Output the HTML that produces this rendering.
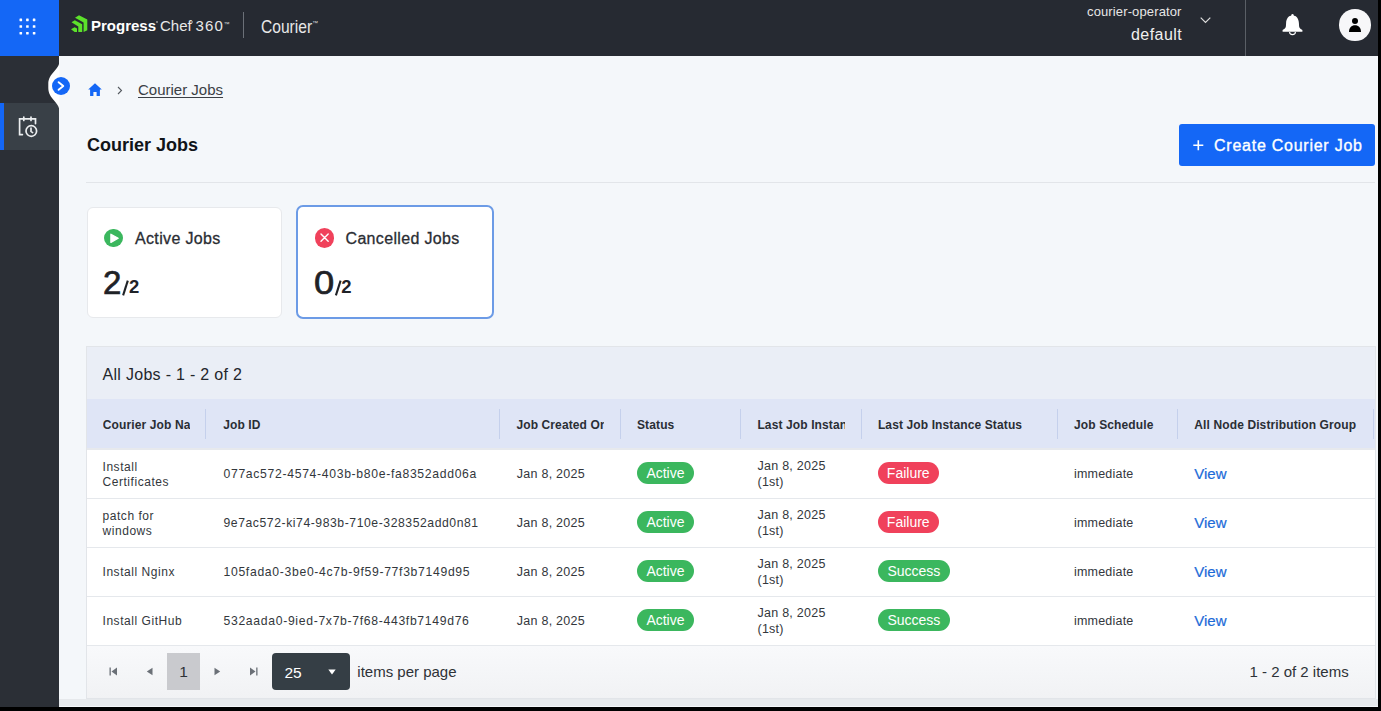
<!DOCTYPE html>
<html><head><meta charset="utf-8">
<style>
*{box-sizing:border-box;margin:0;padding:0}
html,body{width:1381px;height:711px;overflow:hidden;background:#000}
body{position:relative;font-family:"Liberation Sans",sans-serif;color:#23262b}
.a{position:absolute}
svg{display:block}
.t{position:absolute;line-height:1;white-space:nowrap}
#hdr{left:0;top:0;width:1378px;height:56px;background:#262a32}
#apps{left:0;top:0;width:59px;height:56px;background:#1467f6}
#side{left:0;top:56px;width:59px;height:651px;background:#2b2f36}
#main{left:59px;top:56px;width:1319px;height:651px;background:#f4f7fa}
.card{position:absolute;background:#fff;border:1px solid #e7e9ec;border-radius:6px}
.th{position:absolute;top:418.5px;font-size:12px;font-weight:bold;letter-spacing:0.12px;color:#2a2e35;line-height:1;white-space:nowrap}
.sep{position:absolute;top:409px;width:1px;height:30px;background:#c5d0ec}
.row{position:absolute;left:87px;width:1287.5px;height:48px;background:#fff}
.cell{position:absolute;font-size:13px;line-height:1;white-space:nowrap;color:#2b2f34}
.pill{position:absolute;height:22px;border-radius:11px;color:#fff;font-size:14px;line-height:23.5px;text-align:center}
.g{background:#3bb75e}
.r{background:#f0415b}
.view{position:absolute;font-size:15px;line-height:1;color:#1c6bd8}
</style></head><body>
<div id="hdr" class="a"></div>
<div id="apps" class="a"></div>
<div id="side" class="a"></div>
<div id="main" class="a"></div>

<!-- apps grid -->
<svg class="a" style="left:0;top:0" width="59" height="56" viewBox="0 0 59 56"><g fill="#fff"><rect x="19.5" y="18.6" width="2.6" height="2.6" rx="0.4"/><rect x="26.1" y="18.6" width="2.6" height="2.6" rx="0.4"/><rect x="32.8" y="18.6" width="2.6" height="2.6" rx="0.4"/><rect x="19.5" y="25.2" width="2.6" height="2.6" rx="0.4"/><rect x="26.1" y="25.2" width="2.6" height="2.6" rx="0.4"/><rect x="32.8" y="25.2" width="2.6" height="2.6" rx="0.4"/><rect x="19.5" y="31.9" width="2.6" height="2.6" rx="0.4"/><rect x="26.1" y="31.9" width="2.6" height="2.6" rx="0.4"/><rect x="32.8" y="31.9" width="2.6" height="2.6" rx="0.4"/></g></svg>
<!-- progress logo -->
<svg class="a" style="left:70px;top:14px" width="19" height="19" viewBox="0 0 19 19">
<g fill="#5ce12b">
<polygon points="5,3.8 9,1.2 17.3,5.6 17.3,16.2 13.6,18 13.6,8.6"/>
<polygon points="1.5,8.3 4.8,6.3 12.2,10.3 12.2,18 8.3,18 8.3,12.4"/>
<polygon points="1,15.2 4.6,13.2 7,14.6 7,18 4.6,18"/>
</g></svg>
<div class="t" style="left:91px;top:18.3px;font-size:15px;font-weight:bold;color:#fff">Progress</div>
<div class="a" style="left:155.5px;top:20.5px;width:2.5px;height:2.5px;border-radius:50%;background:#999"></div>
<div class="t" style="left:160px;top:18.3px;font-size:15px;color:#e8e8e8">Chef</div>
<div class="a" style="left:190.8px;top:20.5px;width:2.5px;height:2.5px;border-radius:50%;background:#999"></div>
<div class="t" style="left:195.5px;top:18.3px;font-size:15px;color:#e8e8e8;letter-spacing:1.1px">360</div>
<div class="t" style="left:223.5px;top:20.5px;font-size:6px;color:#ddd">&#8482;</div>
<div class="a" style="left:243px;top:12px;width:1px;height:26px;background:#6b7078"></div>
<div class="t" style="left:260.5px;top:16.8px;font-size:19px;color:#e8e8e8;transform:scaleX(0.82);transform-origin:0 0">Courier</div>
<div class="t" style="left:312px;top:20px;font-size:6px;color:#ddd">&#8482;</div>
<!-- right header -->
<div class="t" style="left:1087px;top:4.7px;font-size:13px;color:#e6e6e6;letter-spacing:0.13px">courier-operator</div>
<div class="t" style="left:1131px;top:26.5px;font-size:16px;color:#f0f0f0;letter-spacing:0.45px">default</div>
<svg class="a" style="left:1200px;top:17px" width="11" height="7" viewBox="0 0 11 7"><path d="M0.7,0.7 L5.5,5.5 L10.3,0.7" fill="none" stroke="#ddd" stroke-width="1.2"/></svg>
<div class="a" style="left:1245px;top:0;width:1px;height:56px;background:#5a5f66"></div>
<svg class="a" style="left:1280px;top:10px" width="26" height="28" viewBox="1280 10 26 28">
<circle cx="1292.5" cy="15.2" r="1.2" fill="#fff"/>
<path d="M1292.5,15.6 C1296.9,15.6 1298.7,19.2 1298.9,23 L1299.1,26.3 C1299.3,28.2 1300.6,29.2 1302.4,29.9 L1302.4,31.8 L1282.6,31.8 L1282.6,29.9 C1284.4,29.2 1285.7,28.2 1285.9,26.3 L1286.1,23 C1286.3,19.2 1288.1,15.6 1292.5,15.6 Z" fill="#fff"/>
<path d="M1289.6,32 a2.9,2.6 0 0 0 5.8,0" fill="none" stroke="#fff" stroke-width="1.1"/>
</svg>
<div class="a" style="left:1339.3px;top:9.3px;width:31.5px;height:31.5px;border-radius:50%;background:#f7f7f9"></div>
<div class="a" style="left:1352px;top:17.7px;width:6px;height:6px;border-radius:50%;background:#000"></div>
<svg class="a" style="left:1349px;top:25px" width="12" height="7" viewBox="0 0 12 7"><path d="M0,7 C0,2.5 2.5,0.2 6,0.2 C9.5,0.2 12,2.5 12,7 Z" fill="#000"/></svg>
<div class="a" style="left:1378px;top:0;width:3px;height:711px;background:#000"></div>

<!-- sidebar -->
<div class="a" style="left:0;top:103px;width:59px;height:47px;background:#394047"></div>
<div class="a" style="left:0;top:103px;width:4px;height:47px;background:#1467f6"></div>
<svg class="a" style="left:14px;top:112px" width="26" height="28" viewBox="14 112 26 28">
<g fill="none" stroke="#eceef0" stroke-width="1.7" stroke-linecap="round">
<path d="M22.4,134.6 L19.6,134.6 L19.6,118.8 L35.5,118.8 L35.5,123.6"/>
<path d="M23.8,117 L23.8,120.4 M31,117 L31,120.4"/>
<circle cx="31.3" cy="131" r="5.3"/>
<path d="M31,128.2 L31,131.4 L32.6,132.6"/>
</g></svg>
<!-- notch + collapse -->
<svg class="a" style="left:40px;top:56px" width="20" height="60" viewBox="40 56 20 60">
<path d="M59.5,61 C59.5,70 48.3,73 48.3,84 L48.3,88 C48.3,99 59.5,102 59.5,111 Z" fill="#fff"/>
</svg>
<div class="a" style="left:52px;top:77.3px;width:18px;height:18px;border-radius:50%;background:#1467f6"></div>
<svg class="a" style="left:52px;top:77.3px" width="18" height="18" viewBox="0 0 18 18"><path d="M6.6,5.2 L11.3,9 L6.6,12.8" fill="none" stroke="#fff" stroke-width="1.9" stroke-linecap="round" stroke-linejoin="round"/></svg>
<!-- breadcrumb -->
<svg class="a" style="left:87.5px;top:82.5px" width="14" height="13" viewBox="0 0 14 13"><path d="M7,0.3 L13.8,6.6 L11.9,6.6 L11.9,12.9 L8.6,12.9 L8.6,9 L5.4,9 L5.4,12.9 L2.1,12.9 L2.1,6.6 L0.2,6.6 Z" fill="#1467f6"/></svg>
<svg class="a" style="left:116px;top:86px" width="8" height="9" viewBox="0 0 8 9"><path d="M2,1 L5.5,4.5 L2,8" fill="none" stroke="#555a60" stroke-width="1.1"/></svg>
<div class="t" style="left:138px;top:82px;font-size:15px;color:#3b3f45;text-decoration:underline;text-underline-offset:1.5px">Courier Jobs</div>
<div class="t" style="left:87px;top:135.6px;font-size:18px;font-weight:bold;color:#111418">Courier Jobs</div>
<!-- create button -->
<div class="a" style="left:1179px;top:123.5px;width:196px;height:42px;background:#1467f6;border-radius:3px"></div>
<svg class="a" style="left:1192.5px;top:140px" width="11" height="11" viewBox="0 0 11 11"><path d="M5.3,0.3 L5.3,10.3 M0.3,5.3 L10.3,5.3" stroke="#fff" stroke-width="1.6"/></svg>
<div class="t" style="left:1214px;top:138.1px;font-size:16px;color:#fff;letter-spacing:0.75px;-webkit-text-stroke:0.35px #fff">Create Courier Job</div>
<div class="a" style="left:86px;top:181.5px;width:1289px;height:1px;background:#e2e5e9"></div>
<!-- cards -->
<div class="card" style="left:86.5px;top:206.5px;width:195px;height:111px"></div>
<div class="card" style="left:296px;top:205px;width:198px;height:114px;border:2px solid #6c9be6;border-radius:7px"></div>
<div class="a" style="left:104px;top:228.8px;width:18.6px;height:18.6px;border-radius:50%;background:#3bb75e"></div>
<svg class="a" style="left:104px;top:228.8px" width="19" height="19" viewBox="0 0 19 19"><path d="M6.9,5.2 L14.2,9.3 L6.9,13.4 Z" fill="#fff" stroke="#fff" stroke-width="1.3" stroke-linejoin="round"/></svg>
<div class="t" style="left:135px;top:230.5px;font-size:16px;color:#2a2d33;letter-spacing:0.35px;-webkit-text-stroke:0.3px #2a2d33">Active Jobs</div>
<div class="t" style="left:103px;top:266px;font-size:33px;color:#1f2227;-webkit-text-stroke:0.7px #1f2227">2</div>
<svg class="a" style="left:120px;top:278px" width="12" height="20" viewBox="120 278 12 20"><path d="M127.8,280.6 L123.1,295.4" stroke="#1f2227" stroke-width="2.1"/></svg>
<div class="t" style="left:129px;top:278.3px;font-size:18.5px;font-weight:bold;color:#1f2227">2</div>
<div class="a" style="left:315px;top:228.4px;width:19.2px;height:19.2px;border-radius:50%;background:#f0415b"></div>
<svg class="a" style="left:315px;top:228.4px" width="19" height="19" viewBox="0 0 19 19"><path d="M6,6 L13.2,13.2 M13.2,6 L6,13.2" stroke="#fff" stroke-width="1.4" stroke-linecap="round"/></svg>
<div class="t" style="left:345.5px;top:230.5px;font-size:16px;color:#2a2d33;letter-spacing:0.33px;-webkit-text-stroke:0.3px #2a2d33">Cancelled Jobs</div>
<div class="t" style="left:314px;top:266px;font-size:33px;color:#1f2227;-webkit-text-stroke:0.7px #1f2227;transform:scaleX(1.1);transform-origin:0 0">0</div>
<svg class="a" style="left:332px;top:278px" width="12" height="20" viewBox="332 278 12 20"><path d="M340.6,280.6 L335.9,295.4" stroke="#1f2227" stroke-width="2.1"/></svg>
<div class="t" style="left:341.2px;top:278.3px;font-size:18.5px;font-weight:bold;color:#1f2227">2</div>

<!-- table -->
<div class="a" style="left:86px;top:346px;width:1289.5px;height:353px;border:1px solid #e2e5e9;background:linear-gradient(#f8f9fb 0,#f8f9fb 300px,#f1f2f4 352px)"></div>
<div class="a" style="left:87px;top:347px;width:1287.5px;height:52px;background:#eaeef6"></div>
<div class="t" style="left:102.5px;top:367.3px;font-size:16px;color:#23262c;letter-spacing:0.3px">All Jobs - 1 - 2 of 2</div>
<div class="a" style="left:87px;top:399px;width:1287.5px;height:49px;background:#dfe5f6"></div>
<div class="a" style="left:87px;top:448px;width:1287.5px;height:2px;background:#e7e9ed"></div>
<div class="th" style="left:102.8px;width:87.3px;overflow:hidden;height:14px">Courier Job Name</div>
<div class="th" style="left:223.2px">Job ID</div>
<div class="th" style="left:516.4px;width:88px;overflow:hidden;height:14px">Job Created On</div>
<div class="th" style="left:637px">Status</div>
<div class="th" style="left:757.4px;width:87.3px;overflow:hidden;height:14px">Last Job Instance</div>
<div class="th" style="left:877.9px">Last Job Instance Status</div>
<div class="th" style="left:1074px">Job Schedule</div>
<div class="th" style="left:1194.3px">All Node Distribution Group</div>
<div class="sep" style="left:205.3px"></div>
<div class="sep" style="left:499.3px"></div>
<div class="sep" style="left:619.9px"></div>
<div class="sep" style="left:739.7px"></div>
<div class="sep" style="left:860.5px"></div>
<div class="sep" style="left:1056.7px"></div>
<div class="sep" style="left:1176.5px"></div>
<div class="sep" style="left:1372.5px"></div>
<div class="row" style="top:450px"></div>
<div class="a" style="left:87px;top:498px;width:1287.5px;height:1px;background:#e5e8ec"></div>
<div class="cell" style="left:102.5px;top:460.74px;font-size:12px;letter-spacing:0.55px;color:#33373c">Install</div>
<div class="cell" style="left:102.5px;top:476.44px;font-size:12px;letter-spacing:0.55px;color:#33373c">Certificates</div>
<div class="cell" style="left:223.5px;top:468.07px;font-size:12.2px;letter-spacing:0.68px;color:#33373c">077ac572-4574-403b-b80e-fa8352add06a</div>
<div class="cell" style="left:516.8px;top:467.82px;font-size:12.5px;letter-spacing:0.25px;color:#33373c">Jan 8, 2025</div>
<div class="pill g" style="left:636.6px;top:462.2px;width:57.7px">Active</div>
<div class="cell" style="left:757.5px;top:460.32px;font-size:12.5px;letter-spacing:0.25px;color:#33373c">Jan 8, 2025</div>
<div class="cell" style="left:757.5px;top:476.02px;font-size:12.5px;letter-spacing:0.25px;color:#33373c">(1st)</div>
<div class="pill r" style="left:877.9px;top:462.2px;width:60.7px">Failure</div>
<div class="cell" style="left:1074px;top:467.52px;font-size:12.5px;letter-spacing:0.2px;color:#33373c">immediate</div>
<div class="view" style="left:1194.3px;top:465.8px;-webkit-text-stroke:0.2px #1c6bd8">View</div>
<div class="row" style="top:499px"></div>
<div class="a" style="left:87px;top:547px;width:1287.5px;height:1px;background:#e5e8ec"></div>
<div class="cell" style="left:102.5px;top:509.74px;font-size:12px;letter-spacing:0.55px;color:#33373c">patch for</div>
<div class="cell" style="left:102.5px;top:525.44px;font-size:12px;letter-spacing:0.55px;color:#33373c">windows</div>
<div class="cell" style="left:223.5px;top:517.07px;font-size:12.2px;letter-spacing:0.56px;color:#33373c">9e7ac572-ki74-983b-710e-328352add0n81</div>
<div class="cell" style="left:516.8px;top:516.82px;font-size:12.5px;letter-spacing:0.25px;color:#33373c">Jan 8, 2025</div>
<div class="pill g" style="left:636.6px;top:511.2px;width:57.7px">Active</div>
<div class="cell" style="left:757.5px;top:509.32px;font-size:12.5px;letter-spacing:0.25px;color:#33373c">Jan 8, 2025</div>
<div class="cell" style="left:757.5px;top:525.02px;font-size:12.5px;letter-spacing:0.25px;color:#33373c">(1st)</div>
<div class="pill r" style="left:877.9px;top:511.2px;width:60.7px">Failure</div>
<div class="cell" style="left:1074px;top:516.52px;font-size:12.5px;letter-spacing:0.2px;color:#33373c">immediate</div>
<div class="view" style="left:1194.3px;top:514.8px;-webkit-text-stroke:0.2px #1c6bd8">View</div>
<div class="row" style="top:548px"></div>
<div class="a" style="left:87px;top:596px;width:1287.5px;height:1px;background:#e5e8ec"></div>
<div class="cell" style="left:102.5px;top:566.14px;font-size:12px;letter-spacing:0.55px;color:#33373c">Install Nginx</div>
<div class="cell" style="left:223.5px;top:566.07px;font-size:12.2px;letter-spacing:0.68px;color:#33373c">105fada0-3be0-4c7b-9f59-77f3b7149d95</div>
<div class="cell" style="left:516.8px;top:565.82px;font-size:12.5px;letter-spacing:0.25px;color:#33373c">Jan 8, 2025</div>
<div class="pill g" style="left:636.6px;top:560.2px;width:57.7px">Active</div>
<div class="cell" style="left:757.5px;top:558.32px;font-size:12.5px;letter-spacing:0.25px;color:#33373c">Jan 8, 2025</div>
<div class="cell" style="left:757.5px;top:574.02px;font-size:12.5px;letter-spacing:0.25px;color:#33373c">(1st)</div>
<div class="pill g" style="left:877.9px;top:560.2px;width:72px">Success</div>
<div class="cell" style="left:1074px;top:565.52px;font-size:12.5px;letter-spacing:0.2px;color:#33373c">immediate</div>
<div class="view" style="left:1194.3px;top:563.8px;-webkit-text-stroke:0.2px #1c6bd8">View</div>
<div class="row" style="top:597px"></div>
<div class="a" style="left:87px;top:645px;width:1287.5px;height:1px;background:#e5e8ec"></div>
<div class="cell" style="left:102.5px;top:615.14px;font-size:12px;letter-spacing:0.55px;color:#33373c">Install GitHub</div>
<div class="cell" style="left:223.5px;top:615.07px;font-size:12.2px;letter-spacing:0.68px;color:#33373c">532aada0-9ied-7x7b-7f68-443fb7149d76</div>
<div class="cell" style="left:516.8px;top:614.82px;font-size:12.5px;letter-spacing:0.25px;color:#33373c">Jan 8, 2025</div>
<div class="pill g" style="left:636.6px;top:609.2px;width:57.7px">Active</div>
<div class="cell" style="left:757.5px;top:607.32px;font-size:12.5px;letter-spacing:0.25px;color:#33373c">Jan 8, 2025</div>
<div class="cell" style="left:757.5px;top:623.02px;font-size:12.5px;letter-spacing:0.25px;color:#33373c">(1st)</div>
<div class="pill g" style="left:877.9px;top:609.2px;width:72px">Success</div>
<div class="cell" style="left:1074px;top:614.52px;font-size:12.5px;letter-spacing:0.2px;color:#33373c">immediate</div>
<div class="view" style="left:1194.3px;top:612.8px;-webkit-text-stroke:0.2px #1c6bd8">View</div>

<div class="a" style="left:108.5px;top:667.3px"><svg width="9" height="9" viewBox="0 0 9 9"><path d="M0.5,0.5 L1.8,0.5 L1.8,8.5 L0.5,8.5 Z M8,0.5 L8,8.5 L2.5,4.5 Z" fill="#6b7077"/></svg></div>
<div class="a" style="left:146px;top:667.3px"><svg width="7" height="9" viewBox="0 0 7 9"><path d="M6.5,0.7 L6.5,8.3 L0.8,4.5 Z" fill="#6b7077"/></svg></div>
<div class="a" style="left:167px;top:653.2px;width:33px;height:36.5px;background:#c9cace"></div>
<div class="t" style="left:167px;top:664.3px;width:33px;text-align:center;font-size:15.5px;color:#2e3237">1</div>
<div class="a" style="left:214px;top:667.3px"><svg width="7" height="9" viewBox="0 0 7 9"><path d="M0.5,0.7 L0.5,8.3 L6.2,4.5 Z" fill="#6b7077"/></svg></div>
<div class="a" style="left:249px;top:667.3px"><svg width="9" height="9" viewBox="0 0 9 9"><path d="M1,0.5 L1,8.5 L6.5,4.5 Z M7.2,0.5 L8.5,0.5 L8.5,8.5 L7.2,8.5 Z" fill="#6b7077"/></svg></div>
<div class="a" style="left:272px;top:653.2px;width:78px;height:36.5px;background:#353e45;border-radius:4px"></div>
<div class="t" style="left:284.5px;top:664.5px;font-size:15.5px;color:#fff">25</div>
<div class="a" style="left:328px;top:668.8px"><svg width="8" height="6" viewBox="0 0 8 6"><path d="M0.3,0.5 L7.7,0.5 L4,5.5 Z" fill="#fff"/></svg></div>
<div class="t" style="left:357.3px;top:664px;font-size:15px;color:#2e3237">items per page</div>
<div class="t" style="left:1249.5px;top:664px;font-size:15px;color:#2e3237">1 - 2 of 2 items</div>
<div class="a" style="left:59px;top:699px;width:1319px;height:7px;background:#e6e9ec"></div>
</body></html>
